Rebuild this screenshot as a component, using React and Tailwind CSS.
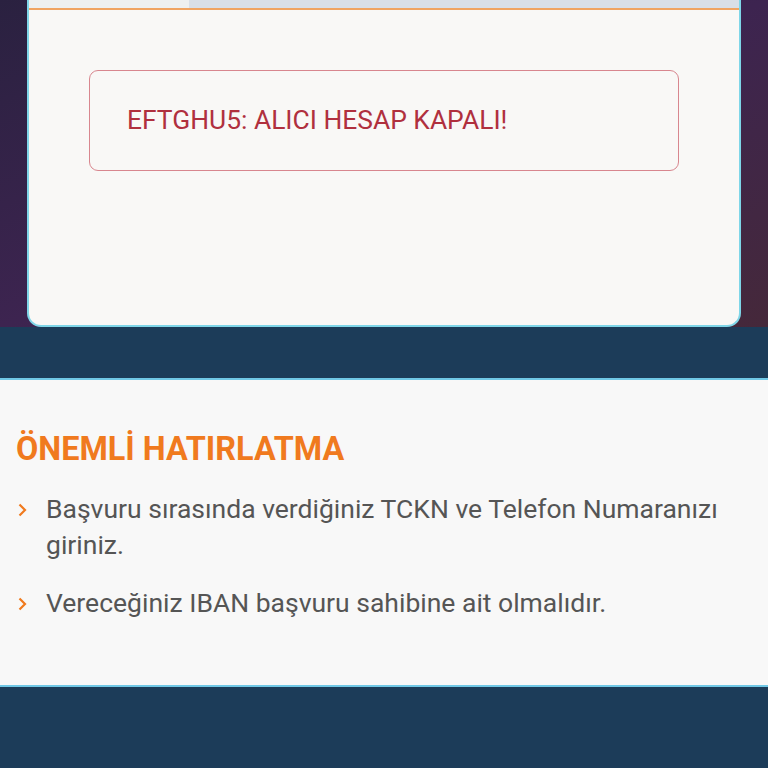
const notes = [
  'Başvuru sırasında verdiğiniz TCKN ve Telefon Numaranızı giriniz.',
  'Vereceğiniz IBAN başvuru sahibine ait olmalıdır.',
];

const Chevron = () => (
  <svg width="12" height="16" viewBox="0 0 12 16" className="shrink-0 mt-[11px]">
    <path d="M3.5 2.5 L9 8 L3.5 13.5" fill="none" stroke="#f07a1e" strokeWidth="2.2" />
  </svg>
);

export default function App() {
  return (
    <div className="w-[768px] h-[768px] overflow-hidden bg-[#1c3c59] font-['Roboto',sans-serif]">
      {/* result panel */}
      <div className="h-[327px] bg-gradient-to-br from-[#2a2140] via-[#3d2450] to-[#45283a] px-[27px]">
        <div className="h-full bg-[#f9f8f6] border-x-2 border-b-2 border-[#7fd6e8] rounded-b-[14px] flex flex-col">
          <div className="h-[10px] flex border-b-2 border-[#f0a462]">
            <div className="w-[160px] bg-[#eef0f0]" />
            <div className="flex-1 bg-[#d9dfe7]" />
          </div>
          <div className="px-[60px] pt-[60px]">
            <div className="h-[101px] border border-[#d8868e] rounded-[9px] flex items-center pl-[37px]">
              <span className="text-[26.4px] text-[#b0303e]">EFTGHU5: ALICI HESAP KAPALI!</span>
            </div>
          </div>
        </div>
      </div>

      <div className="h-[51px]" />

      {/* reminders */}
      <div className="h-[309px] bg-[#f8f8f8] border-y-2 border-[#70c8e6] px-4 pt-[49px]">
        <h2 className="text-[32.4px] font-bold text-[#f07a1e] leading-[40px]">ÖNEMLİ HATIRLATMA</h2>
        <ul className="mt-[22px] flex flex-col gap-[22px]">
          {notes.map((n) => (
            <li key={n} className="flex gap-[18px]">
              <Chevron />
              <span className="text-[26.5px] leading-[36px] text-[#555555] pr-[16px]">{n}</span>
            </li>
          ))}
        </ul>
      </div>
    </div>
  );
}
